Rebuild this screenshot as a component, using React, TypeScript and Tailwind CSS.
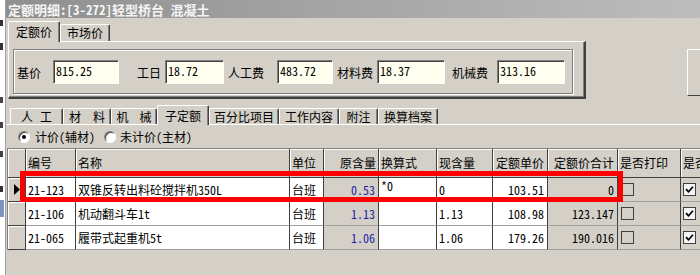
import React from "react";

type Row = {
  code: string;
  name: string;
  unit: string;
  base: string;
  formula: string;
  now: string;
  price: string;
  total: string;
  current?: boolean;
};

const rows: Row[] = [
  { code: "21-123", name: "双锥反转出料砼搅拌机350L", unit: "台班", base: "0.53", formula: "*0", now: "0", price: "103.51", total: "0", current: true },
  { code: "21-106", name: "机动翻斗车1t", unit: "台班", base: "1.13", formula: "", now: "1.13", price: "108.98", total: "123.147" },
  { code: "21-065", name: "履带式起重机5t", unit: "台班", base: "1.06", formula: "", now: "1.06", price: "179.26", total: "190.016" },
];

// 上半分のタブ
const topTabs = [
  { label: "定额价", cls: "w-[52px]", active: true },
  { label: "市场价", cls: "w-[50px]" },
];

// 下半分のタブ
const bottomTabs = [
  { label: ["人", "工"], cls: "w-[53px]", gap: "gap-[7px]" },
  { label: ["材", "料"], cls: "w-[48px]", gap: "gap-[12px]" },
  { label: ["机", "械"], cls: "w-[46px]", gap: "gap-[11px]" },
  { label: ["子定额"], cls: "w-[52px]", gap: "", active: true },
  { label: ["百分比项目"], cls: "w-[70px]", gap: "" },
  { label: ["工作内容"], cls: "w-[60px]", gap: "" },
  { label: ["附注"], cls: "w-[39px]", gap: "" },
  { label: ["换算档案"], cls: "w-[60px]", gap: "" },
];

const fields = [
  { label: "基价", value: "815.25", labelCls: "w-[39px] pl-[3px]", inputCls: "w-[66px]" },
  { label: "工日", value: "18.72", labelCls: "w-[46px] pl-[18px]", inputCls: "w-[59px]" },
  { label: "人工费", value: "483.72", labelCls: "w-[53px] pl-[4px]", inputCls: "w-[56px]" },
  { label: "材料费", value: "18.37", labelCls: "w-[44px] pl-[4px]", inputCls: "w-[68px]" },
  { label: "机械费", value: "313.16", labelCls: "w-[52px] pl-[7px]", inputCls: "w-[68px]" },
];

function Radio({ checked }: { checked?: boolean }) {
  return (
    <span className="w-[12px] h-[12px] rounded-full bg-white border border-t-[#808080] border-l-[#808080] border-r-white border-b-white shadow-[inset_1px_1px_0_#404040] flex items-center justify-center">
      {checked && <span className="w-[4px] h-[4px] rounded-full bg-black" />}
    </span>
  );
}

function Check({ checked }: { checked?: boolean }) {
  return (
    <span className={`w-[13px] h-[13px] border border-[#404040] flex items-center justify-center ${checked ? "bg-[#f4f4f4]" : ""}`}>
      {checked && (
        <svg width="9" height="9" viewBox="0 0 9 9">
          <path d="M1 4.2 L3.5 6.8 L8 1.8" fill="none" stroke="#000" strokeWidth="1.7" />
        </svg>
      )}
    </span>
  );
}

function LeftStrip() {
  // 後ろのウィンドウがはみ出している部分
  return (
    <div className="w-[5px] h-full bg-white flex flex-col">
      <div className="h-[20px]" />
      <div className="h-[6px] w-[3px] bg-[#333]" />
      <div className="h-[17px]" />
      <div className="h-[7px] w-[3px] bg-[#333]" />
      <div className="h-[47px]" />
      <div className="h-[6px] w-[3px] bg-[#444]" />
      <div className="h-[19px]" />
      <div className="h-[6px] w-[3px] bg-[#444]" />
      <div className="h-[23px]" />
      <div className="h-[6px] w-[3px] bg-[#444]" />
      <div className="h-[29px]" />
      <div className="h-[6px] w-[3px] bg-[#333]" />
      <div className="h-[8px]" />
      <div className="h-[17px] w-[4px] bg-[#7d95c0]" />
    </div>
  );
}

const headCell = "h-[29px] bg-[#d4d0c8] border-r border-b border-[#404040] shadow-[inset_1px_1px_0_#fff] flex items-center whitespace-nowrap overflow-hidden";
const cell = "h-[24px] border-r border-r-[#404040] border-b border-b-[#a0a0a0] flex items-center whitespace-nowrap overflow-hidden";

export default function App() {
  return (
    <div className="w-[700px] h-[275px] overflow-hidden flex bg-[#d4d0c8] text-[12px] text-black leading-none font-['Noto_Sans_CJK_SC',sans-serif] [font-feature-settings:'hwid']">
      <LeftStrip />
      <div className="flex-1 min-w-0 flex flex-col border-l border-[#a0a0a0]">
        {/* タイトルバー */}
        <div className="h-[18px] shrink-0 bg-linear-to-r from-[#8f8f8f] to-[#bdbdbd] text-[#f4f4f4] font-bold text-[13px] pl-[2px] flex items-center">
          定额明细:[3-272]轻型桥台 混凝土
        </div>

        {/* 定额价 / 市场价 */}
        <div className="h-[81px] shrink-0 flex">
          <div className="ml-[2px] w-[578px] flex flex-col">
            <div className="h-[23px] flex items-end">
              {topTabs.map((t) => (
                <div
                  key={t.label}
                  className={`${t.cls} ${t.active ? "h-[21px] mb-[-1px] relative z-10 bg-[#d4d0c8]" : "h-[17px]"} border-t border-l border-white border-r border-r-[#404040] shadow-[inset_-1px_0_0_#808080] rounded-t-[2px] flex items-center justify-center`}
                >
                  {t.label}
                </div>
              ))}
            </div>
            <div className="h-[58px] border-t border-l border-white border-r-2 border-b-2 border-r-[#404040] border-b-[#404040] shadow-[inset_-1px_-1px_0_#808080]">
              <div className="ml-[4px] mt-[7px] w-[560px] h-[45px] border border-[#808080] shadow-[inset_1px_1px_0_#fff,1px_1px_0_#fff] flex items-center">
                {fields.map((f) => (
                  <React.Fragment key={f.label}>
                    <span className={`${f.labelCls} pt-[3px]`}>{f.label}</span>
                    <span
                      className={`${f.inputCls} h-[24px] bg-[#fffff0] border border-t-[#808080] border-l-[#808080] border-r-white border-b-white shadow-[inset_1px_1px_0_#404040] pl-[2px] pt-[4px]`}
                    >
                      {f.value}
                    </span>
                  </React.Fragment>
                ))}
              </div>
            </div>
          </div>
          <div className="ml-auto mt-[31px] w-[13px] h-[47px] border-t border-l border-white border-b border-b-[#404040]" />
        </div>

        {/* 下半分 */}
        <div className="flex-1 flex flex-col">
          <div className="h-[25px] shrink-0 flex items-end pl-[4px]">
            {bottomTabs.map((t) => (
              <div
                key={t.label.join("")}
                className={`${t.cls} ${t.active ? "h-[20px] mb-[-1px] relative z-10 bg-[#d4d0c8]" : "h-[16px]"} border-t border-l border-white border-r border-r-[#404040] shadow-[inset_-1px_0_0_#808080] rounded-t-[2px] flex items-center justify-center`}
              >
                <span className={`flex ${t.gap}`}>
                  {t.label.map((s) => (
                    <span key={s}>{s}</span>
                  ))}
                </span>
              </div>
            ))}
          </div>
          <div className="flex-1 border-t border-white">
            {/* 計価 / 未計価 */}
            <div className="mt-[4px] h-[16px] flex items-center pl-[12px]">
              <div className="w-[86px] flex items-center gap-[5px]">
                <Radio checked />
                <span>计价(辅材)</span>
              </div>
              <div className="flex items-center gap-[4px]">
                <Radio />
                <span>未计价(主材)</span>
              </div>
            </div>

            {/* グリッド */}
            <div className="relative mt-[3px] ml-[1px] border-t border-l border-[#808080]">
              <div className="grid grid-cols-[18px_50px_214px_34px_55px_58px_56px_55px_70px_63px_63px]">
                <div className={headCell} />
                <div className={`${headCell} pl-[2px]`}>编号</div>
                <div className={`${headCell} pl-[2px]`}>名称</div>
                <div className={`${headCell} pl-[2px]`}>单位</div>
                <div className={`${headCell} justify-end pr-[2px]`}>原含量</div>
                <div className={`${headCell} pl-[2px]`}>换算式</div>
                <div className={`${headCell} pl-[2px]`}>现含量</div>
                <div className={`${headCell} justify-end pr-[3px]`}>定额单价</div>
                <div className={`${headCell} justify-end pr-[3px]`}>定额价合计</div>
                <div className={`${headCell} pl-[2px]`}>是否打印</div>
                <div className={`${headCell} pl-[2px]`}>是否计价</div>

                {rows.map((r) => (
                  <React.Fragment key={r.code}>
                    <div className="h-[24px] bg-[#d4d0c8] border-r border-b border-[#404040] shadow-[inset_1px_1px_0_#fff] flex items-center justify-center">
                      {r.current && (
                        <svg width="6" height="11" viewBox="0 0 6 11">
                          <polygon points="0,0 6,5.5 0,11" fill="#000" />
                        </svg>
                      )}
                    </div>
                    <div className={`${cell} bg-white pl-[2px]`}>{r.code}</div>
                    <div className={`${cell} bg-white pl-[2px]`}>{r.name}</div>
                    <div className={`${cell} bg-white pl-[2px]`}>{r.unit}</div>
                    <div className={`${cell} bg-[#d4d0c8] justify-end pr-[3px] text-[#2424a0]`}>{r.base}</div>
                    <div className={`${cell} bg-white pl-[2px] !items-start pt-[2px]`}>{r.formula}</div>
                    <div className={`${cell} bg-white pl-[2px]`}>{r.now}</div>
                    <div className={`${cell} bg-white justify-end pr-[3px]`}>{r.price}</div>
                    <div className={`${cell} bg-[#d4d0c8] justify-end pr-[3px]`}>{r.total}</div>
                    <div className={`${cell} bg-[#d4d0c8] pl-[3px]`}>
                      <Check />
                    </div>
                    <div className={`${cell} bg-[#d4d0c8] pl-[2px]`}>
                      <Check checked />
                    </div>
                  </React.Fragment>
                ))}
              </div>
              {/* 赤枠 */}
              <div className="absolute left-[12px] top-[22px] w-[603px] h-[31px] border-[5px] border-[#ff0000] pointer-events-none" />
            </div>
          </div>
        </div>
      </div>
    </div>
  );
}
